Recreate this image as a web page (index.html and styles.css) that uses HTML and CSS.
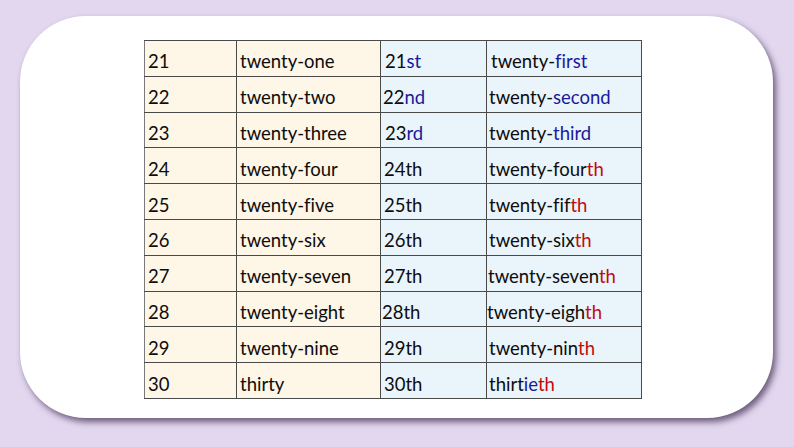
FILE: index.html
```html
<!DOCTYPE html>
<html>
<head>
<meta charset="utf-8">
<link rel="stylesheet" href="styles.css">
</head>
<body>
<div class="card">
  <table class="nums">
    <colgroup><col class="w1"><col class="w2"><col class="w3"><col class="w4"></colgroup>
    <tr><td class="c1">21</td><td class="c2">twenty-one</td><td class="c3 p4">21<span class="b">st</span></td><td class="c4 p4">twenty-<span class="b">first</span></td></tr>
    <tr><td class="c1">22</td><td class="c2">twenty-two</td><td class="c3 p2">22<span class="b">nd</span></td><td class="c4">twenty-<span class="b">second</span></td></tr>
    <tr><td class="c1">23</td><td class="c2">twenty-three</td><td class="c3 p4">23<span class="b">rd</span></td><td class="c4">twenty-<span class="b">third</span></td></tr>
    <tr><td class="c1">24</td><td class="c2">twenty-four</td><td class="c3">24th</td><td class="c4">twenty-four<span class="r">th</span></td></tr>
    <tr><td class="c1">25</td><td class="c2">twenty-five</td><td class="c3">25th</td><td class="c4">twenty-fif<span class="r">th</span></td></tr>
    <tr><td class="c1">26</td><td class="c2">twenty-six</td><td class="c3">26th</td><td class="c4">twenty-six<span class="r">th</span></td></tr>
    <tr><td class="c1">27</td><td class="c2">twenty-seven</td><td class="c3">27th</td><td class="c4 p1">twenty-seven<span class="r">th</span></td></tr>
    <tr><td class="c1">28</td><td class="c2">twenty-eight</td><td class="c3 p1">28th</td><td class="c4 p0">twenty-eigh<span class="r">th</span></td></tr>
    <tr><td class="c1">29</td><td class="c2">twenty-nine</td><td class="c3">29th</td><td class="c4">twenty-nin<span class="r">th</span></td></tr>
    <tr><td class="c1">30</td><td class="c2">thirty</td><td class="c3">30th</td><td class="c4">thirt<span class="b">ie</span><span class="r">th</span></td></tr>
  </table>
</div>
</body>
</html>
```
FILE: styles.css
```css
html, body {
  margin: 0;
  padding: 0;
}
body {
  background: #e2d7ef;
  width: 794px;
  height: 447px;
  overflow: hidden;
  font-family: "Lato", "Liberation Sans", sans-serif;
  padding-top: 16px;
  box-sizing: border-box;
}
.card {
  margin-left: 20px;
  width: 753px;
  height: 402px;
  background: #ffffff;
  border-radius: 66px;
  box-shadow: 3px 4px 6px rgba(60, 40, 75, 0.7);
  padding: 24px 0 0 124px;
  box-sizing: border-box;
}
.nums {
  border-collapse: collapse;
  table-layout: fixed;
  width: 497px;
}
.w1 { width: 92px; }
.w2 { width: 144px; }
.w3 { width: 106px; }
.w4 { width: 155px; }
.nums tr {
  height: 35.8px;
}
.nums td {
  border: 1px solid #4a4a4a;
  padding: 6px 0 0 3px;
  font-size: 18.5px;
  color: #0d0d0d;
  white-space: nowrap;
  overflow: hidden;
  line-height: 20px;
  font-variant-ligatures: none;
  font-feature-settings: "liga" 0;
}
.c1 { background: #fef6e6; border-left-color: #7a7a7a !important; }
.c2 { background: #fef6e6; border-left-color: #888 !important; }
.c3 { background: #e9f4fb; }
.c4 { background: #e9f4fb; padding-left: 2px !important; }
.nums td.p4 { padding-left: 4px; }
.nums td.p2 { padding-left: 2px; }
.nums td.p1 { padding-left: 1px; }
.c4.p4 { padding-left: 4px !important; }
.c4.p1 { padding-left: 1px !important; }
.c4.p0 { padding-left: 0 !important; }
.b { color: #1a1a9c; }
.r { color: #c40a0a; }
```
